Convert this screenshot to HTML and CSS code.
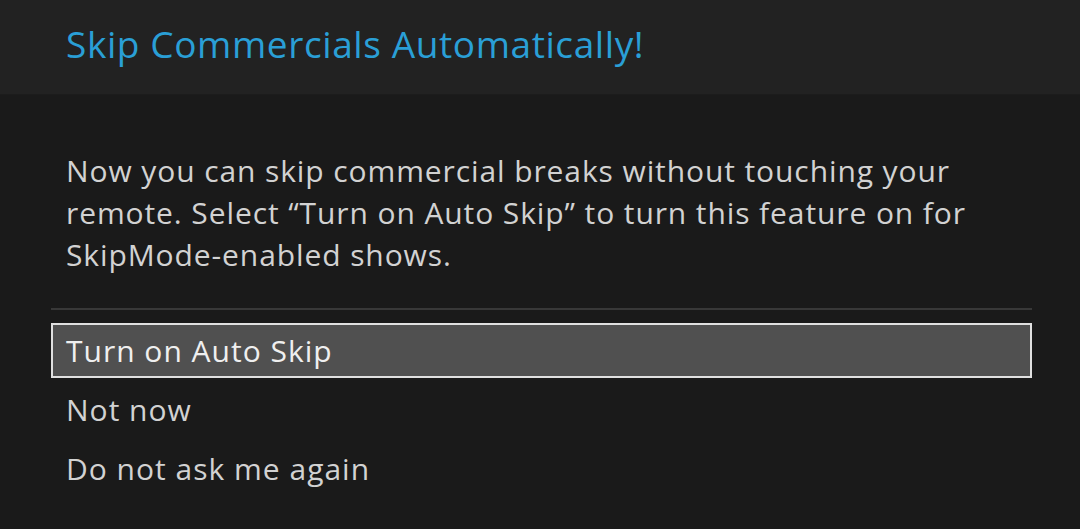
FILE: index.html
```html
<!DOCTYPE html>
<html lang="en">
<head>
    <meta charset="UTF-8">
    <title>Skip Commercials Automatically!</title>
    <link rel="stylesheet" href="styles.css">
</head>
<body>
    <div class="dialog">
        <!-- Cabeçalho -->
        <div class="header">
            <h1>Skip Commercials Automatically!</h1>
        </div>

        <div class="content">
            <p class="message">Now you can skip commercial breaks without touching your remote. Select “Turn on Auto Skip” to turn this feature on for SkipMode-enabled shows.</p>

            <ul class="options">
                <li class="option selected">Turn on Auto Skip</li>
                <li class="option">Not now</li>
                <li class="option">Do not ask me again</li>
            </ul>
        </div>
    </div>
</body>
</html>
```

FILE: styles.css
```css
body {
    margin: 0;
    padding: 0;
    background-color: #1a1a1a;
    font-family: 'Open Sans', 'Lato', sans-serif;
    color: #d2d2d2;
}
.dialog {
    width: 1080px;
    height: 529px;
    overflow: hidden;
}
.header {
    background-color: #222222;
    height: 95px;
    padding-left: 66px;
    box-sizing: border-box;
    border-bottom: 1px solid #1c1c1c;
}
h1 {
    margin: 0;
    padding-top: 20px;
    font-size: 37px;
    font-weight: normal;
    color: #2a9fd6;
    line-height: 48px;
    letter-spacing: 0.6px;
}
.content {
    padding: 0 48px 0 51px;
}
.message {
    margin: 0;
    padding: 55px 0 32px 15px;
    font-size: 30px;
    line-height: 42px;
    letter-spacing: 0.9px;
    border-bottom: 2px solid #383838;
}
.options {
    list-style: none;
    margin: 13px 0 0 0;
    padding: 0;
}
.option {
    height: 59px;
    line-height: 59px;
    padding-left: 15px;
    font-size: 30px;
    letter-spacing: 1px;
    box-sizing: border-box;
}
.option.selected {
    height: 55px;
    line-height: 51px;
    margin-bottom: 2px;
    padding-left: 13px;
    background-color: #505050;
    border: 2px solid #e0e0e0;
    color: #efefef;
}
```
